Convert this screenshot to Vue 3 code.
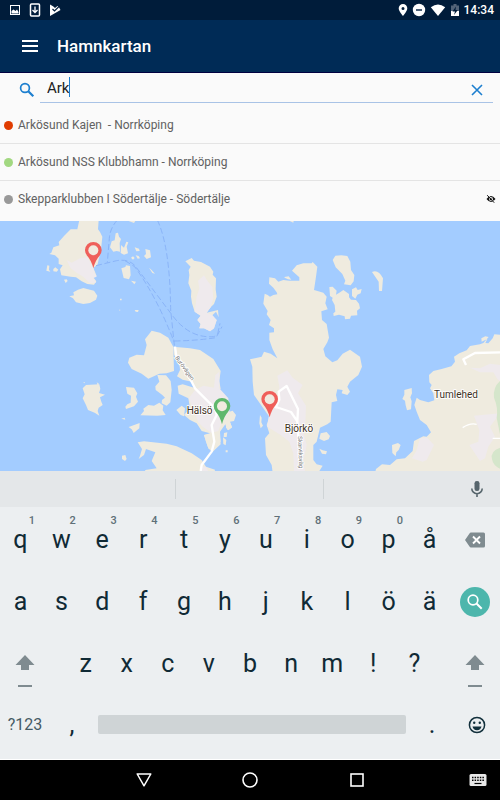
<script setup>
import { ref } from 'vue'

const query = ref('Ark')
const harbours = [
  { name: 'Arkösund Kajen  - Norrköping', status: 'busy' },
  { name: 'Arkösund NSS Klubbhamn - Norrköping', status: 'free' },
  { name: 'Skepparklubben I Södertälje - Södertälje', status: 'unknown', hidden: true },
]
const topKeys = ['q', 'w', 'e', 'r', 't', 'y', 'u', 'i', 'o', 'p', 'å'].map((letter, i) => ({
  letter,
  hint: i < 10 ? String((i + 1) % 10) : '',
}))
const middleKeys = ['a', 's', 'd', 'f', 'g', 'h', 'j', 'k', 'l', 'ö', 'ä']
const bottomKeys = ['z', 'x', 'c', 'v', 'b', 'n', 'm', '!', '?']
const pins = [
  { x: 280, y: 88, color: '#ef5f5a' },
  { x: 666, y: 556, color: '#5fb86c' },
  { x: 809, y: 535, color: '#ef5f5a' },
]
</script>

<template>
  <div class="screen">
    <div class="status">
      <div class="status-group left">
        <svg width="12" height="12" viewBox="0 0 12 12"><rect x="1.500" y="1.500" width="9" height="9" fill="none" stroke="#fff" /><path d="M2.500 9.500V7l2-1.500 2 1.500 1.500-1.500L9.500 8v1.500z" fill="#fff" /></svg>
        <svg width="12" height="14" viewBox="0 0 12 14"><rect x="1.500" y="1" width="9" height="12" rx="1" fill="none" stroke="#fff" stroke-width="1.500" /><path d="M6 3.500V9M3.500 7L6 9.500 8.500 7" fill="none" stroke="#fff" stroke-width="1.300" /></svg>
        <svg width="12" height="14" viewBox="0 0 12 14"><path d="M1 1.500L4 3.200 6 5 8.500 3 10 4.200 11.500 7 1 13z" fill="#fff" /><path d="M3.500 6l2 2L11 2.500" fill="none" stroke="#001c3a" stroke-width="1.200" /></svg>
      </div>
      <div class="status-group right">
        <svg width="10" height="14" viewBox="0 0 10 14"><path fill-rule="evenodd" d="M5 1a4.300 4.300 0 0 1 4.300 4.300C9.300 8.500 5 13 5 13S.7 8.500.7 5.300A4.300 4.300 0 0 1 5 1zm0 2.900a1.500 1.500 0 1 0 0 3 1.500 1.500 0 0 0 0-3z" fill="#fff" /></svg>
        <svg width="14" height="14" viewBox="0 0 14 14"><circle cx="7" cy="7" r="6.200" fill="#fff" /><path d="M4 7h6" stroke="#39506a" stroke-width="1.800" /></svg>
        <svg width="16" height="14" viewBox="0 0 16 14"><path d="M.8 4.200Q8-1.400 15.200 4.200L8 13z" fill="#fff" /></svg>
        <svg width="10" height="14" viewBox="0 0 10 14"><path d="M1 2.500h2.500V1h3v1.500H9V8H1z" fill="#526378" /><path d="M1 8h8v5H1z" fill="#fff" /><path d="M6 3.500L2.500 8.500H5L4 12l3.800-5H5.500z" fill="#001c3a" /></svg>
        <span>14:34</span>
      </div>
    </div>

    <header class="appbar">
      <button class="icon-button" aria-label="Meny">
        <svg width="16" height="12" viewBox="0 0 16 12"><path d="M0 1h16M0 6h16M0 11h16" stroke="#fff" stroke-width="1.800" /></svg>
      </button>
      <h1>Hamnkartan</h1>
    </header>

    <main>
      <form class="search" @submit.prevent>
        <label for="query" aria-label="Sök hamn">
          <svg width="16" height="16" viewBox="0 0 16 16"><circle cx="6" cy="6" r="4.400" fill="none" stroke="#1d7fcf" stroke-width="1.700" /><path d="M9.300 9.300l5 5" stroke="#1d7fcf" stroke-width="2.200" /></svg>
        </label>
        <div class="field">
          <input id="query" v-model="query" type="text" autocomplete="off" />
          <i class="caret"></i>
          <button type="button" class="icon-button" aria-label="Rensa" @click="query = ''">
            <svg width="12" height="12" viewBox="0 0 12 12"><path d="M1 1l10 10M11 1L1 11" stroke="#1d7fcf" stroke-width="1.600" /></svg>
          </button>
        </div>
      </form>

      <ul class="results">
        <li v-for="harbour in harbours" :key="harbour.name">
          <i class="dot" :class="harbour.status"></i>
          <span>{{ harbour.name }}</span>
          <svg v-if="harbour.hidden" width="10" height="8" viewBox="0 0 10 8"><path d="M.5 4Q5-2 9.500 4 5 10 .5 4z" fill="#111" /><circle cx="5" cy="4" r="2" fill="#fafafa" /><circle cx="5" cy="4" r="1.300" fill="#111" /><path d="M2 0l7 7.500" stroke="#fafafa" stroke-width=".7" /><path d="M1.200.2l7 7.500" stroke="#111" stroke-width="1" /></svg>
        </li>
      </ul>

      <svg class="map" viewBox="0 0 1500 750" preserveAspectRatio="xMidYMid slice" role="img" aria-label="Karta">
        <g class="land" transform="translate(0 -3)">
          <path d="M238 0L232 28 212 28 192 48 176 66 178 76 160 82 154 98 148 102 165 106 176 116 176 132 188 136 180 148 184 166 212 170 228 172 245 184 262 192 282 194 289 184 280 172 290 168 286 158 280 143 292 135 303 90 307 50 300 36 294 28 296 0z" />
          <path class="town" d="M200 120L215 128 240 115 262 112 280 143 284 160 290 170 280 174 288 188 270 190 250 170 230 158 212 145z" />
          <path d="M142 136l6 1-1 12 4 6-12-3zM160 147l6-5 9 7-5 6-10-1zM192 179l8-1 3 5-6 6zM208 229l14-3-2-9 14-8 16-5 14 4 18 4 10 15-4 12-18 10-20 3-22-5-9-12z" />
          <path d="M347 40l7-2 3 12 6 7-4 12 1 26-10-2-10 2-10-13 5-18 9-3zM363 75l9 8 7-18 6 2-5 13 4 20-12 4-10-5zM404 82l13 4 2 7-10 1zM407 106l9 2 4 7-7 1zM393 113l6-4 5 5-5 5zM436 87l14 4 3 21-13 5-8-9 6-6zM386 3l20 0-4 6zM364 145l12-4 2-5 12 2 2 28-5 12-16-4zM393 182l15 3-5 8zM447 143l7 6 11 12-8-2zM360 236l5 0 0 5-5 0zM357 269l4 0-1 4zM404 270l12 0-2 6-7-1z" />
          <path d="M556 124L575 114 582 122 603 126 630 140 640 155 638 164 648 175 647 208 650 230 642 252 632 262 620 278 654 270 656 292 648 275 637 286 650 300 642 325 630 334 612 325 598 325 602 312 592 300 602 287 584 275 576 250 573 230 574 212 565 190 568 165 566 150 572 140z" />
          <path class="town" d="M594 182L612 166 622 182 637 200 640 235 632 262 620 278 637 286 650 300 642 325 630 334 612 325 598 325 602 312 592 300 602 287 584 275 590 230 598 205z" />
        </g>

        <g class="ferry" transform="translate(0 -3)">
          <path d="M352 0Q330 25 328 55L322 128M472 0Q510 80 512 270L524 385M288 137L350 122Q385 116 405 137L520 290Q570 355 640 350 650 348 653 342M375 122L404 140Q470 230 522 365M523 363Q590 362 648 353L666 320M653 342L660 310" />
        </g>

        <g class="land" transform="translate(750 -93)">
          <path d="M248 210L256 197 274 196 292 198 301 215 303 240 313 255 311 274 302 286 282 283 286 272 277 252 257 232zM366 246Q385 237 399 265L396 303 387 303 386 275zM238 291L248 290 260 302 258 314 268 308 280 300 297 312 297 322 303 329 318 330 327 341 330 355 321 362 322 376 303 377 300 386 285 388 284 379 267 374 251 378 250 370 256 365 254 345 246 330 248 323 240 318zM306 298L318 292 323 300 335 297 332 310 322 314 316 326 306 318zM103 261l13-2 8 10-10-1-10-5zM119 93l12 0-1 5z" />
        </g>
        <path class="land" d="M808 169L825 172 835 182 850 177 868 179 898 179 898 169 876 149 890 133 910 127 935 127 938 123 952 137 948 167 942 207 955 211 970 215 980 227 976 247 983 265 964 271 966 297 980 309 987 350 982 364 970 384 976 406 997 424 1012 418 1028 398 1050 386 1080 407 1086 437 1075 462 1050 482 1042 497 1050 512 1042 522 1025 517 1028 507 1012 505 1008 522 1012 540 995 544 992 602 982 610 960 620 950 662 940 672 940 717 950 730 968 734 955 755 818 755 815 732 798 702 795 652 808 637 800 612 808 587 790 562 762 522 758 482 757 437 750 415 765 412 785 407 792 392 812 398 832 412 818 385 808 357 808 335 822 334 822 322 807 312 812 297 800 280 803 270 790 248 794 218 803 222 810 227 820 222 832 220 830 214 820 200 807 188z" />
        <g class="land" transform="translate(750 372)">
          <path d="M30 210L35 218 34 232 39 242 32 250 28 235zM212 265l18-4 10 12-4 10-14 5-14-7zM208 311l10 5 13 3-3 9-12-2zM463 135l14-4 8-2 1 16-5 12 4 12-2 24-12 3-4-15-2-14-8-5 6-13zM426 300l18-6 8 6-6 15-7 7-2 12-10-10z" />
          <path d="M750-31L733-32 728-20 715-5 706-6 712-18 695-10 694-20 706-26 716-24 700-6 690-2 660 3 650 16 628 25 612 35 615 50 604 64 575 72 550 78 537 90 538 112 545 120 540 130 550 145 553 166 535 172 510 165 500 158 493 180 500 200 510 225 530 240 543 262 530 275 520 274 492 288 488 318 465 340 440 343 420 360 396 358 378 372 375 385 750 385z" />
        </g>

        <g transform="translate(0 372)">
          <path class="land" d="M455-43L480-37 505-22 520 6 522 78 500 85 478 86 445 101 425 86 395 72 384 53 388 38 410 29 432 31 440 0 435-17z" />
          <path class="land" d="M520 5L570 10 600 15 640 42 662 78 658 108 662 132 654 135 672 150 685 170 688 200 698 197 708 210 702 228 690 230 696 248 682 255 676 238 660 260 662 290 650 305 638 321 625 310 618 290 612 270 630 265 605 258 590 235 570 225 552 210 570 190 565 160 536 146 533 122 548 118 582 128 575 110 548 104 531 94 540 75 538 50 522 30z" />
          <path class="town" d="M585 135L610 122 642 128 646 90 658 80 658 130 685 160 688 200 665 230 655 258 635 264 608 245 595 232 580 195 566 160z" />
          <path class="land" d="M472 90L498 91 512 108 515 135 511 172 500 182 485 175 486 165 495 158 487 150 467 135 466 124 478 110zM378 126L402 128 412 145 408 155 414 170 402 184 378 192 376 185 382 178 392 173 393 152 382 146zM421 211L432 198 430 191 445 180 462 182 478 173 490 182 488 196 497 210 472 212zM386 246l33-12-1 16-17 14-6-11zM364 221l10-3 2 6zM366 332l10-2 4 12-5 6-9-6zM529 195l16-13 10 8-3 24-10-4zM249 112l6 0-1 3zM248 130L258 120 298 118 301 132 297 144 315 149 300 157 304 170 308 180 296 188 293 198 298 212 284 203 264 195 258 180 248 160 254 148zM290 112l7 4-4 3zM612 270l20-4 26-8 4 40-24 22-13-10zM678 235l12-3 6 14-10 10-8-8zM672 264l10-2-2 14-9 0zM669 277l10 8-2 16-7-4zM677 316l6 0 0 6-6 0z" />
          <path class="land" d="M413 292L432 289 500 296 530 304 575 325 605 345 618 365 645 374 642 390 432 390 436 375 470 370 455 348 466 322 438 312 432 330 416 342 420 332 426 312z" />
          <path class="town" d="M606 365L618 365 626 382 604 382z" />
        </g>

        <g class="town" transform="translate(750 372)">
          <path d="M82 92L112 76 128 98 158 120 144 145 168 182 166 235 160 260 170 300 160 350 166 382 132 382 130 325 118 290 92 270 52 245 56 215 84 168 88 125z" />
          <path d="M660 68L690 70 720 56 750 60 750 108 742 102 730 82 690 82zM672 212L750 205 720 245 735 275 715 305 705 340 690 348 658 300 685 290 688 255zM510 280L530 277 552 300 530 345 518 350 486 340 500 315z" />
        </g>
        <path d="M1500 480Q1478 500 1482 530 1495 560 1490 590L1500 640zM1500 680Q1470 690 1476 715 1480 735 1500 743z" fill="#d5e6cb" />
        <g class="road">
          <path d="M525 377L530 412 575 482 585 502 645 562 650 582 635 612 643 662 635 692 605 732 602 750" />
          <path d="M828 558L873 573 892 601 894 564 860 495 836 512 838 536 826 562M892 601L896 665" />
          <path d="M1500 394L1425 396 1390 415 1398 432" />
          <path class="minor" d="M1388 620Q1410 605 1430 610M1478 652L1500 652" />
        </g>

        <g v-for="pin in pins" :key="pin.x" :transform="`translate(${pin.x} ${pin.y})`">
          <path d="M0 54Q-6 30-18 17A25 25 0 1 1 18 17Q6 30 0 54z" :fill="pin.color" />
          <circle r="15" fill="#f1eadf" />
        </g>

        <g class="labels">
          <text x="560" y="578">Hälsö</text>
          <text x="854" y="632">Björkö</text>
          <text x="1302" y="531">Tumlehed</text>
          <text class="street" transform="translate(524 410) rotate(54)">Burövägen</text>
          <text class="street" transform="translate(894 646) rotate(88)">Skarviksväg</text>
        </g>
      </svg>
    </main>

    <section class="keyboard" aria-label="Tangentbord">
      <div class="suggestions">
        <span></span><span></span>
        <span class="voice">
          <button class="icon-button" aria-label="Röstinmatning">
            <svg width="14" height="18" viewBox="0 0 14 18"><rect x="4.500" y="1" width="5" height="10" rx="2.300" fill="#56656c" /><path d="M1.800 8.500a5.200 5.200 0 0 0 10.400 0M7 13.500V17" fill="none" stroke="#56656c" stroke-width="1.600" /></svg>
          </button>
        </span>
      </div>

      <div class="row full">
        <button v-for="key in topKeys" :key="key.letter" class="key">
          {{ key.letter }}<small v-if="key.hint">{{ key.hint }}</small>
        </button>
        <button class="key" aria-label="Radera">
          <svg width="20" height="16" viewBox="0 0 20 16"><path d="M6 .5h12.500a1.500 1.500 0 0 1 1.500 1.500v12a1.500 1.500 0 0 1-1.500 1.500H6a2 2 0 0 1-1.500-1L0 8l4.500-6.500A2 2 0 0 1 6 .5z" fill="#7f8b90" /><path d="M8 4.500l7 7M15 4.500l-7 7" stroke="#fff" stroke-width="1.900" /></svg>
        </button>
      </div>
      <div class="row full">
        <button v-for="key in middleKeys" :key="key" class="key">{{ key }}</button>
        <button class="key" aria-label="Sök">
          <svg width="30" height="30" viewBox="0 0 30 30"><circle cx="15" cy="15" r="15" fill="#4db6ac" /><circle cx="13" cy="13" r="4.800" fill="none" stroke="#fff" stroke-width="1.700" /><path d="M16.500 16.500l5.200 5.200" stroke="#fff" stroke-width="2" /></svg>
        </button>
      </div>
      <div class="row letters">
        <button class="key shift" aria-label="Skift">
          <svg width="20" height="34" viewBox="0 0 20 34"><path d="M10 1L.5 11H6v5h8v-5h5.500z" fill="#7f8b90" /><path d="M3 32h14" stroke="#7f8b90" stroke-width="2" /></svg>
        </button>
        <i></i>
        <button v-for="key in bottomKeys" :key="key" class="key">{{ key }}</button>
        <i></i>
        <button class="key shift" aria-label="Skift höger">
          <svg width="20" height="34" viewBox="0 0 20 34"><path d="M10 1L.5 11H6v5h8v-5h5.500z" fill="#7f8b90" /><path d="M3 32h14" stroke="#7f8b90" stroke-width="2" /></svg>
        </button>
      </div>
      <div class="row lower">
        <button class="key symbols">?123</button>
        <button class="key">,</button>
        <button class="key space" aria-label="Mellanslag"></button>
        <button class="key">.</button>
        <button class="key" aria-label="Emoji">
          <svg width="18" height="18" viewBox="0 0 18 18"><circle cx="9" cy="9" r="7.600" fill="none" stroke="#12303c" stroke-width="1.500" /><circle cx="6.200" cy="6.800" r="1.200" fill="#12303c" /><circle cx="11.800" cy="6.800" r="1.200" fill="#12303c" /><path d="M4.500 10.500h9a4.600 4.600 0 0 1-9 0z" fill="#12303c" /></svg>
        </button>
      </div>
    </section>

    <nav class="navbar">
      <span></span>
      <button aria-label="Tillbaka"><svg width="16" height="14" viewBox="0 0 16 14"><path d="M1.200 1h13.600L8 12.800z" fill="none" stroke="#fff" stroke-width="1.500" stroke-linejoin="round" /></svg></button>
      <button aria-label="Hem"><svg width="16" height="16" viewBox="0 0 16 16"><circle cx="8" cy="8" r="7" fill="none" stroke="#fff" stroke-width="1.600" /></svg></button>
      <button aria-label="Översikt"><svg width="14" height="14" viewBox="0 0 14 14"><rect x="1" y="1" width="12" height="12" fill="none" stroke="#fff" stroke-width="1.600" /></svg></button>
      <button class="end" aria-label="Byt tangentbord"><svg width="18" height="14" viewBox="0 0 18 14"><rect x=".5" y="1" width="17" height="12" rx="1.500" fill="#e8e8e8" /><path d="M3 4.500h12M3 7.200h12" stroke="#000" stroke-width="1.500" stroke-dasharray="1.500 1.100" /><path d="M5.500 10.500h7" stroke="#000" stroke-width="1.200" /></svg></button>
    </nav>
  </div>
</template>

<style>
body {
  margin: 0;
  background: #000;
}
</style>

<style scoped>
.screen {
  display: flex;
  flex-direction: column;
  min-height: 100vh;
  font-family: Roboto, sans-serif;
}
button {
  padding: 0;
  border: 0;
  background: none;
  font: inherit;
  color: inherit;
}
svg {
  display: block;
  flex: none;
}
.icon-button {
  display: grid;
  place-items: center;
}
.status {
  display: flex;
  justify-content: space-between;
  height: 20px;
  padding: 0 6px 0 9px;
  background: #001c3a;
  color: #fff;
  font-size: 12px;
  font-weight: 500;
}
.status-group {
  display: flex;
  align-items: center;
}
.left {
  gap: 8px;
}
.right {
  gap: 4px;
}
.appbar {
  display: flex;
  align-items: center;
  gap: 19px;
  height: 53px;
  padding: 0 22px;
  box-sizing: border-box;
  border-bottom: 1px solid #000040;
  background: #002b56;
  color: #fff;
}
h1 {
  margin: 0;
  font-size: 17px;
  font-weight: 500;
  line-height: 24px;
}
.search {
  display: flex;
  align-items: center;
  gap: 5px;
  height: 34px;
  padding: 0 7px 0 19px;
  background: #fafafa;
}
.field {
  position: relative;
  display: flex;
  flex: 1;
  align-items: center;
  align-self: flex-start;
  height: 29px;
  padding-right: 10px;
  border-bottom: 1px solid #a9c3e6;
}
.field .icon-button {
  padding-top: 4px;
}
input {
  flex: 1;
  min-width: 0;
  height: 28px;
  padding: 0 0 0 7px;
  border: 0;
  outline: 0;
  background: none;
  color: #212121;
  font: 15px Roboto, sans-serif;
}
.caret {
  position: absolute;
  left: 29px;
  top: 4px;
  width: 1px;
  height: 20px;
  background: #1d7fcf;
}
.results {
  margin: 0;
  padding: 0 4px 3px;
  list-style: none;
  background: #fafafa;
}
.results li {
  display: flex;
  align-items: center;
  gap: 5px;
  height: 36px;
  margin: 0 -4px;
  padding: 0 4px;
  border-bottom: 1px solid #e4e4e4;
  color: #616161;
  font-size: 12px;
  white-space: pre;
}
.results li:last-child {
  border-color: transparent;
}
.results span {
  flex: 1;
}
.dot {
  width: 9px;
  height: 9px;
  border-radius: 50%;
}
.busy {
  background: #e03c00;
}
.free {
  background: #a2d881;
}
.unknown {
  background: #999;
}
.map {
  width: 100%;
  height: 250px;
  background: #a3ccff;
}
.land {
  fill: #efebdf;
}
.town {
  fill: #efeaed;
}
.ferry {
  fill: none;
  stroke: #8ab4f8;
  stroke-width: 3;
  stroke-dasharray: 18 8;
}
.road {
  fill: none;
  stroke: #fff;
  stroke-width: 7;
  stroke-linejoin: round;
}
.minor {
  stroke-width: 4;
}
.labels {
  fill: #40301c;
  stroke: #fff;
  stroke-width: 5px;
  paint-order: stroke;
  font-size: 30px;
}
.street {
  fill: #777;
  font-size: 18px;
}
.keyboard {
  padding-bottom: 4px;
  border-bottom: 1px solid #fff;
  background: #eceff1;
  color: #102a35;
}
.suggestions {
  display: grid;
  grid-template-columns: 176fr 148fr 176fr;
  align-items: center;
  height: 36px;
  background: #e4e7e9;
}
.suggestions span {
  height: 20px;
  box-sizing: border-box;
  border-right: 1px solid #cfd4d6;
}
.suggestions .voice {
  display: flex;
  justify-content: flex-end;
  align-items: center;
  padding-right: 16px;
  border: 0;
}
.row {
  display: grid;
  height: 62px;
}
.full {
  grid-template-columns: repeat(11, minmax(0, 409fr)) minmax(0, 501fr);
}
.letters {
  grid-template-columns: 50fr 15fr repeat(9, minmax(0, 41fr)) 15fr 50fr;
}
.lower {
  grid-template-columns: 50fr 44fr 316fr 44fr 46fr;
}
.key {
  position: relative;
  display: flex;
  align-items: center;
  justify-content: center;
  min-width: 0;
  padding-top: 3px;
  font-size: 25px;
  line-height: 30px;
}
.key small {
  position: absolute;
  top: 8px;
  right: 6px;
  color: #607078;
  font-size: 11px;
  font-weight: 500;
  line-height: 12px;
}
.shift {
  padding-top: 18px;
}
.lower .key {
  padding-top: 1px;
}
.lower .symbols {
  color: #455a64;
  font-size: 16px;
}
.space::before {
  content: '';
  flex: 1;
  height: 19px;
  margin: 0 4px;
  border-radius: 2px;
  background: #cfd4d6;
}
.navbar {
  display: grid;
  grid-template-columns: 90fr 107fr 106fr 107fr 90fr;
  flex: 1;
  min-height: 40px;
  background: #000;
}
.navbar button {
  display: flex;
  align-items: center;
  justify-content: center;
}
.navbar .end {
  justify-content: flex-end;
  padding-right: 13px;
}
</style>
